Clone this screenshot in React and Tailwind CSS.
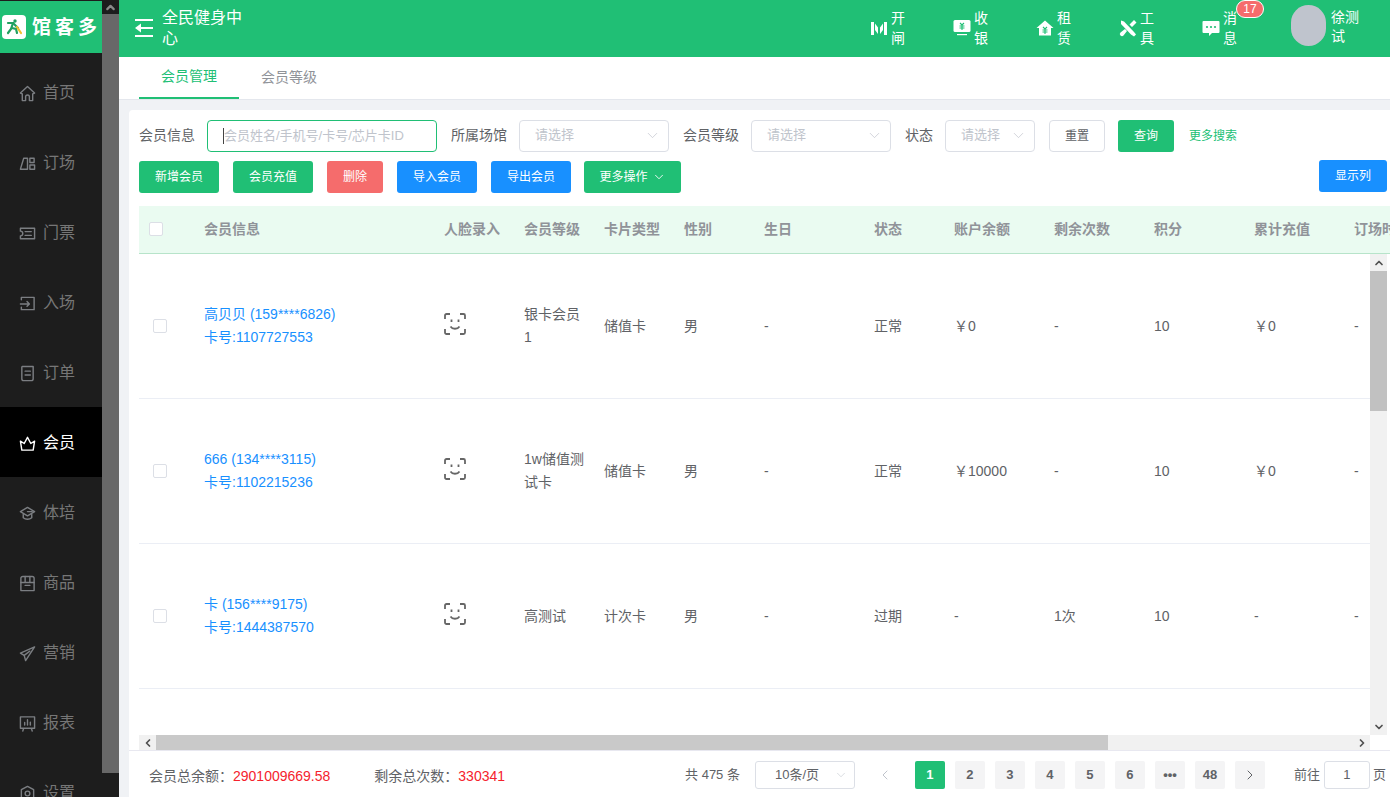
import React from 'react';
import { ChevronDown, ChevronLeft, ChevronRight, ChevronUp } from 'lucide-react';

const FONT = '[font-family:"Liberation_Sans","Noto_Sans_CJK_SC",sans-serif]';

const Svg = ({ children, size = 18, className = '' }) => (
  <svg width={size} height={size} viewBox="0 0 18 18" fill="none" stroke="currentColor" strokeWidth="1.5" strokeLinejoin="round" strokeLinecap="round" className={className}>
    {children}
  </svg>
);

const NAV = [
  { label: '首页', path: <path d="M9 1.500 1.500 8.500 3.500 9.500V16.500h3.500v-4a2 2 0 0 1 4 0v4h3.500V9.500l2-1L9 1.500Z" /> },
  { label: '订场', path: <><path d="M5 3.500h4v11.500H1.500L5 3.500Z" /><path d="M11.500 3.500h4.500v4.500h-4.500zM11.500 10.500H16.500v4.500h-5z" /></> },
  { label: '门票', path: <><path d="M1.500 3.500h15v11h-15v-3a2 2 0 0 0 0-5v-3Z" /><path d="M6.500 7h6.500M6.500 11h6.500" /></> },
  { label: '入场', path: <><path d="M2.500 5V2.500h13.500v13H2.500V13" /><path d="M1.500 9.500h9.500M8.500 7l2.500 2.500L8.500 12" /></> },
  { label: '订单', path: <><path d="M3.500 1.500h11.500v13a2 2 0 0 1-2 2H5a2 2 0 0 1-2-2V2Z" /><path d="M6.500 6.500h5.500M6.500 10.500h5.500" /></> },
  { label: '会员', active: true, path: <path d="M1.500 6.500 5.500 9 9 2.500 12.500 9l4-2.500-1.500 9.500H3L1.500 6.500Z" /> },
  { label: '体培', path: <><path d="M9 2.500 1.500 7 9 11.500 16.500 7 9 2.500Z" /><path d="M4.500 10v3.500c2.500 2 6.500 2 9 0V10" /><path d="M9 7h5" /></> },
  { label: '商品', path: <><path d="M4 1.500h10a2 2 0 0 1 2 2V16.500H2V3.500a2 2 0 0 1 2-2Z" /><path d="M2 8h14M6.500 11h5M6.500 1.500V8M11.500 1.500V8" /></> },
  { label: '营销', path: <><path d="M16.500 2 1.500 8.500l4 2.500 1.500 5.500L16.500 2Z" /><path d="M5.500 11l6-4.500" /></> },
  { label: '报表', path: <><path d="M1.500 2h15v12h-15zM5 14l-1 3M13 14l1 3" /><path d="M6 10.500V8M9 10.500V5M12 10.500V7.500" /></> },
  { label: '设置', path: <><path d="M9 1.500 15.500 5v8L9 16.500 2.500 13V5L9 1.500Z" /><circle cx="9" cy="9" r="2.500" /></> },
];

const Sidebar = () => (
  <div className="flex w-[119px] shrink-0 overflow-hidden bg-[#1d1d1d]">
    <div className="w-[102px] shrink-0">
      <div className="mt-px mb-[4px] flex h-[52px] items-center bg-[#20bf75] pl-[2px]">
        <div className="flex h-[24px] w-[24px] items-center justify-center rounded-[4px] bg-white">
          <svg width="20" height="20" viewBox="0 0 20 20" fill="none" strokeWidth="2.200" strokeLinecap="round">
            <circle cx="11" cy="4" r="1.700" fill="#20a060" />
            <path d="M4 6h5l-2 6-3 4M8 11l4 1 1 4" stroke="#20a060" />
            <path d="M10 7l4 4" stroke="#20a060" />
            <path d="M13 10l4 6" stroke="#f0c030" />
          </svg>
        </div>
        <span className="ml-[6px] text-[19px] leading-none font-bold tracking-[4px] text-white">馆客多</span>
      </div>
      {NAV.map(({ label, path, active }) => (
        <div key={label} className={`flex h-[70px] items-center pt-[2px] pl-[19px] ${active ? 'bg-black text-white' : 'text-[#7b7e82]'}`}>
          <Svg size={17}>{path}</Svg>
          <span className={`ml-[7px] text-base ${active ? 'text-white' : 'text-[#767676]'}`}>{label}</span>
        </div>
      ))}
    </div>
    <div className="flex w-[17px] shrink-0 flex-col">
      <div className="flex h-[14px] items-center justify-center text-[#8a8a8a]">
        <ChevronUp size={13} strokeWidth={4} />
      </div>
      <div className="h-[759px] bg-[#686868]" />
    </div>
  </div>
);

const TOOLS = [
  {
    label: '开闸',
    icon: <><path d="M1 3h3v13H1zM14 3h3v13h-3z" fill="white" /><path d="M5 4.500l3 4v6.500l-3-4zM13 4.500l-3 4v6.500l3-4z" fill="white" /></>,
  },
  {
    label: '收银',
    icon: <><rect x="0.500" y="1" width="17" height="12" rx="1.500" fill="white" /><path d="M7 4l2 2 2-2M6.500 7h5M6.500 9h5M9 6v5" stroke="#20bf75" strokeWidth="1.100" /><rect x="4" y="15" width="10" height="1.200" fill="white" /></>,
  },
  {
    label: '租赁',
    icon: <><path d="M9 1.500 0.500 9h2.500v7.500h12V9h2.500L9 1.500Z" fill="white" /><path d="M7 8l2 2 2-2M6.500 11h5M6.500 13h5M9 10v5" stroke="#20bf75" strokeWidth="1.100" /></>,
  },
  {
    label: '工具',
    icon: <><path d="M2 1.500l3 1 10 10.500 2 2.500-2 2-3-2L2 5z" fill="white" /><path d="M15 1l2.500 2.500-4.500 4.500-2.500-2.500zM6 10l2 2-3.500 4.500a1.800 1.800 0 0 1-3-3z" fill="white" /></>,
  },
  {
    label: '消息',
    icon: <><path d="M1.500 2h15a1 1 0 0 1 1 1v10a1 1 0 0 1-1 1H10l-3 3v-3H1.500a1 1 0 0 1-1-1V3a1 1 0 0 1 1-1Z" fill="white" /><circle cx="5" cy="8" r="1.100" fill="#20bf75" /><circle cx="9" cy="8" r="1.100" fill="#20bf75" /><circle cx="13" cy="8" r="1.100" fill="#20bf75" /></>,
    badge: '17',
  },
];

const Header = () => (
  <div className="flex h-[57px] shrink-0 items-center bg-[#20bf75] pb-[2px] text-white">
    <svg width="18" height="18" viewBox="0 0 18 18" fill="none" stroke="white" strokeWidth="2" className="ml-[16px]">
      <path d="M0 1h18M6 9h12M0 17h18" />
      <path d="M0 9l6-4.500v9z" fill="white" stroke="none" />
    </svg>
    <div className="ml-[9px] w-[80px] text-base leading-[21px]">全民健身中心</div>
    <div className="ml-[628px] flex">
      {TOOLS.map(({ label, icon, badge }) => (
        <div key={label} className="relative flex w-[83px] items-center">
          <svg width="18" height="18" viewBox="0 0 18 18" fill="none">{icon}</svg>
          <div className="ml-[3px] w-[14px] text-sm leading-[20px]">{label}</div>
          {badge && (
            <span className="absolute top-[-8px] left-[34px] flex h-[18px] w-[28px] items-center justify-center rounded-full border border-white bg-[#f56c6c] text-xs">
              {badge}
            </span>
          )}
        </div>
      ))}
    </div>
    <div className="mb-[4px] ml-[6px] h-[41px] w-[35px] rounded-full bg-[#bfc4cd]" />
    <div className="mb-[2px] ml-[5px] w-[28px] text-sm leading-[19px]">徐测试</div>
  </div>
);

const Tabs = () => (
  <div className="flex h-[43px] shrink-0 border-b border-[#e4e7ed] bg-white pl-[20px] text-sm">
    <div className="flex h-[42px] w-[100px] items-center justify-center border-b-2 border-[#20bf75] pb-[2px] text-[#20bf75]">会员管理</div>
    <div className="ml-[22px] flex h-[42px] items-center pb-[2px] text-[#909399]">会员等级</div>
  </div>
);

const Select = ({ className }) => (
  <div className={`flex h-[32px] items-center justify-between rounded-[4px] border border-[#dcdfe6] pr-[7px] pb-[2px] pl-[15px] text-[13px] text-[#c0c4cc] ${className}`}>
    请选择
    <ChevronDown size={17} strokeWidth={1} />
  </div>
);

const Label = ({ children, className = '' }) => <span className={`pb-[2px] text-sm whitespace-nowrap text-[#606266] ${className}`}>{children}</span>;

const Filters = () => (
  <div className="flex h-[32px] items-center pl-[10px]">
    <Label className="w-[68px]">会员信息</Label>
    <div className="flex h-[32px] w-[230px] items-center rounded-[4px] border border-[#20bf75] pl-[15px] text-[13px] text-[#c0c4cc]">
      <span className="h-[16px] w-px bg-[#444]" />
      会员姓名/手机号/卡号/芯片卡ID
    </div>
    <Label className="ml-[14px] w-[68px]">所属场馆</Label>
    <Select className="w-[150px]" />
    <Label className="ml-[14px] w-[68px]">会员等级</Label>
    <Select className="w-[140px]" />
    <Label className="ml-[14px] w-[40px]">状态</Label>
    <Select className="w-[90px]" />
    <div className="ml-[14px] flex h-[32px] w-[56px] items-center justify-center rounded-[4px] border border-[#dcdfe6] text-xs text-[#606266]">重置</div>
    <div className="ml-[13px] flex h-[32px] w-[56px] items-center justify-center rounded-[3px] bg-[#20bf75] text-xs text-white">查询</div>
    <span className="ml-[15px] text-xs text-[#20bf75]">更多搜索</span>
  </div>
);

const Btn = ({ color, className, children }) => (
  <div className={`flex h-[32px] items-center justify-center rounded-[3px] text-xs text-white ${color} ${className}`}>{children}</div>
);

const Actions = () => (
  <div className="mt-[9px] flex h-[32px] pr-[3px] pl-[10px]">
    <Btn color="bg-[#20bf75]" className="w-[80px]">新增会员</Btn>
    <Btn color="bg-[#20bf75]" className="ml-[14px] w-[80px]">会员充值</Btn>
    <Btn color="bg-[#f56c6c]" className="ml-[14px] w-[56px]">删除</Btn>
    <Btn color="bg-[#1890ff]" className="ml-[14px] w-[80px]">导入会员</Btn>
    <Btn color="bg-[#1890ff]" className="ml-[14px] w-[80px]">导出会员</Btn>
    <Btn color="bg-[#20bf75]" className="ml-[13px] w-[97px] gap-[4px]">
      更多操作
      <ChevronDown size={14} strokeWidth={1.5} />
    </Btn>
    <Btn color="bg-[#1890ff]" className="mt-[-1px] ml-auto w-[68px]">显示列</Btn>
  </div>
);

const COLS = [
  { key: 'check', w: 'w-[65px]' },
  { key: 'info', w: 'w-[240px]', title: '会员信息' },
  { key: 'face', w: 'w-[80px]', title: '人脸录入' },
  { key: 'level', w: 'w-[80px]', title: '会员等级' },
  { key: 'card', w: 'w-[80px]', title: '卡片类型' },
  { key: 'sex', w: 'w-[80px]', title: '性别' },
  { key: 'birth', w: 'w-[110px]', title: '生日' },
  { key: 'status', w: 'w-[80px]', title: '状态' },
  { key: 'balance', w: 'w-[100px]', title: '账户余额' },
  { key: 'times', w: 'w-[100px]', title: '剩余次数' },
  { key: 'points', w: 'w-[100px]', title: '积分' },
  { key: 'total', w: 'w-[100px]', title: '累计充值' },
  { key: 'book', w: 'w-[100px]', title: '订场时间' },
];

const ROWS = [
  { name: '高贝贝 (159****6826)', no: '卡号:1107727553', level: '银卡会员1', card: '储值卡', sex: '男', birth: '-', status: '正常', balance: '￥0', times: '-', points: '10', total: '￥0', book: '-' },
  { name: '666 (134****3115)', no: '卡号:1102215236', level: '1w储值测试卡', card: '储值卡', sex: '男', birth: '-', status: '正常', balance: '￥10000', times: '-', points: '10', total: '￥0', book: '-' },
  { name: '卡 (156****9175)', no: '卡号:1444387570', level: '高测试', card: '计次卡', sex: '男', birth: '-', status: '过期', balance: '-', times: '1次', points: '10', total: '-', book: '-' },
];

const FaceIcon = () => (
  <svg width="22" height="22" viewBox="0 0 22 22" fill="none" stroke="#666" strokeWidth="1.800" className="mt-[-4px]">
    <path d="M1 6V2.500A1.500 1.500 0 0 1 2.500 1H6M16 1h3.500A1.500 1.500 0 0 1 21 2.500V6M21 16v3.500a1.500 1.500 0 0 1-1.500 1.500H16M6 21H2.500A1.500 1.500 0 0 1 1 19.500V16" />
    <path d="M7.500 6.500v2.500M14.500 6.500v2.500M6.500 13.500c2 3 7 3 9 0" />
  </svg>
);

const Cell = ({ col, row }) => {
  if (col.key === 'check') {
    return <span className="mt-[-1px] ml-[14px] block h-[14px] w-[14px] rounded-[2px] border border-[#dcdfe6] bg-white" />;
  }
  if (col.key === 'info') {
    return (
      <div className="text-[14px] leading-[23px] text-[#1890ff]">
        <div>{row.name}</div>
        <div>{row.no}</div>
      </div>
    );
  }
  if (col.key === 'face') return <FaceIcon />;
  if (col.key === 'level') return <div className="w-[60px] leading-[23px] break-all">{row.level}</div>;
  return <span>{row[col.key]}</span>;
};

const ScrollBars = () => (
  <div className="flex w-[17px] shrink-0 flex-col bg-[#f1f1f1] text-[#505050]">
    <div className="flex h-[17px] items-center justify-center">
      <ChevronUp size={12} strokeWidth={3.500} />
    </div>
    <div className="h-[140px] bg-[#c1c1c1]" />
    <div className="flex-1" />
    <div className="flex h-[17px] items-center justify-center">
      <ChevronDown size={12} strokeWidth={3.500} />
    </div>
  </div>
);

const Table = () => (
  <div className="mt-[13px] flex min-h-0 flex-1 flex-col pl-[10px]">
    <div className="flex h-[48px] shrink-0 items-center overflow-hidden border-b border-[#b7e4ca] bg-[#eafbf1] pb-[2px] text-sm font-bold text-[#909399]">
      {COLS.map((col) => (
        <div key={col.key} className={`shrink-0 whitespace-nowrap ${col.w}`}>
          {col.key === 'check' ? <span className="ml-[10px] block h-[14px] w-[14px] rounded-[2px] border border-[#dcdfe6] bg-white" /> : col.title}
        </div>
      ))}
    </div>
    <div className="flex min-h-0 flex-1">
      <div className="min-w-0 flex-1 overflow-hidden">
        {ROWS.map((row) => (
          <div key={row.no} className="flex h-[145px] items-center border-b border-[#ebeef5] text-sm text-[#606266]">
            {COLS.map((col) => (
              <div key={col.key} className={`shrink-0 ${col.w}`}>
                <Cell col={col} row={row} />
              </div>
            ))}
          </div>
        ))}
      </div>
      <ScrollBars />
      <div className="w-[3px] shrink-0" />
    </div>
    <div className="flex h-[15px] shrink-0 pr-[20px]">
      <div className="flex flex-1 bg-[#f1f1f1] text-[#505050]">
        <div className="flex w-[17px] items-center justify-center">
          <ChevronLeft size={12} strokeWidth={3.500} />
        </div>
        <div className="w-[952px] bg-[#c9c9c9]" />
        <div className="flex-1" />
        <div className="flex w-[17px] items-center justify-center">
          <ChevronRight size={12} strokeWidth={3.500} />
        </div>
      </div>
    </div>
  </div>
);

const PageBtn = ({ active, className = '', children }) => (
  <div className={`flex h-[28px] w-[30px] items-center justify-center rounded-[2px] text-[13px] font-bold ${active ? 'bg-[#20bf75] text-white' : 'bg-[#f4f4f5] text-[#606266]'} ${className}`}>
    {children}
  </div>
);

const Footer = () => (
  <div className="flex h-[47px] shrink-0 items-start border-t border-[#e8e8f0] pt-[10px] pl-[20px] text-sm text-[#606266]">
    <span className="mt-[5px] whitespace-nowrap">会员总余额：<span className="text-[#f5222d]">2901009669.58</span></span>
    <span className="mt-[5px] ml-[44px] whitespace-nowrap">剩余总次数：<span className="text-[#f5222d]">330341</span></span>
    <span className="mt-[5px] ml-[180px] text-[13px] whitespace-nowrap">共 475 条</span>
    <div className="ml-[15px] flex h-[28px] w-[100px] shrink-0 items-center justify-between rounded-[3px] border border-[#dcdfe6] pr-[6px] pl-[19px] text-[13px]">
      10条/页
      <ChevronDown size={14} strokeWidth={1} className="text-[#c0c4cc]" />
    </div>
    <div className="ml-[20px] flex h-[28px] w-[20px] shrink-0 items-center justify-center text-[#c0c4cc]">
      <ChevronLeft size={16} strokeWidth={1.500} />
    </div>
    <div className="ml-[20px] flex shrink-0 gap-[10px]">
      <PageBtn active>1</PageBtn>
      <PageBtn>2</PageBtn>
      <PageBtn>3</PageBtn>
      <PageBtn>4</PageBtn>
      <PageBtn>5</PageBtn>
      <PageBtn>6</PageBtn>
      <PageBtn>•••</PageBtn>
      <PageBtn>48</PageBtn>
      <PageBtn><ChevronRight size={16} strokeWidth={1.500} /></PageBtn>
    </div>
    <span className="mt-[5px] ml-[29px] text-[13px] whitespace-nowrap">前往</span>
    <div className="ml-[4px] flex h-[28px] w-[46px] shrink-0 items-center justify-center rounded-[3px] border border-[#dcdfe6] text-[13px]">1</div>
    <span className="mt-[5px] ml-[3px] text-[13px]">页</span>
  </div>
);

export default function App() {
  return (
    <div className={`flex h-[797px] overflow-hidden bg-[#f0f2f5] ${FONT}`}>
      <Sidebar />
      <div className="flex min-w-0 flex-1 flex-col">
        <Header />
        <Tabs />
        <div className="mt-[10px] ml-[10px] flex min-h-0 flex-1 flex-col rounded-tl-[4px] bg-white pt-[10px]">
          <Filters />
          <Actions />
          <Table />
          <Footer />
        </div>
      </div>
    </div>
  );
}
